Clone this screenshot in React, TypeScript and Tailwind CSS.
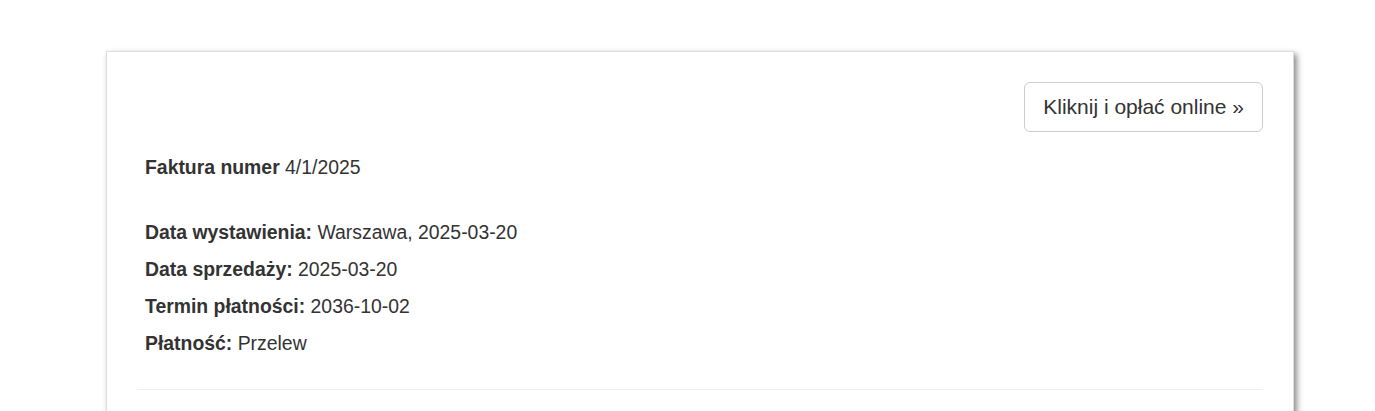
const rows = [
  { label: 'Data wystawienia:', value: 'Warszawa, 2025-03-20' },
  { label: 'Data sprzedaży:', value: '2025-03-20' },
  { label: 'Termin płatności:', value: '2036-10-02' },
  { label: 'Płatność:', value: 'Przelew' }
];

export default function App() {
  return (
    <div className="min-h-screen bg-white pt-[51px] font-['Liberation_Sans',Arial,sans-serif] text-[#333]">
      <div className="ml-[106px] w-[1188px] border border-[#ddd] bg-white px-[30px] pb-[40px] pt-[30px] shadow-[3px_3px_6px_rgba(0,0,0,0.45)]">
        <div className="flex justify-end">
          <button
            type="button"
            className="h-[50px] rounded-[6px] border border-[#ccc] bg-white px-[18px] text-[21px] text-[#333]"
          >
            Kliknij i opłać online »
          </button>
        </div>

        <div className="px-[8px]">
          <p className="mt-[17px] text-[19.4px] leading-[37px]">
            <b>Faktura numer</b> 4/1/2025
          </p>

          <div className="mt-[28px]">
            {rows.map((row) => (
              <p key={row.label} className="text-[19.4px] leading-[37px]">
                <b>{row.label}</b> {row.value}
              </p>
            ))}
          </div>
        </div>

        <hr className="mt-[27px] border-t border-[#eee]" />
      </div>
    </div>
  );
}
